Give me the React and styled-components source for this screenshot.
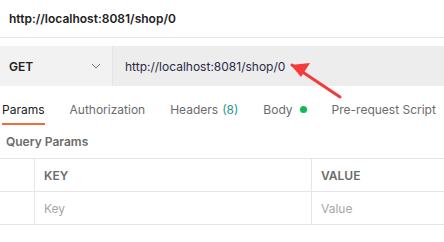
import React from "react";
import styled, { createGlobalStyle } from "styled-components";

const colors = {
  border: "#e6e6e6",
  text: "#212121",
  muted: "#6b6b6b",
  placeholder: "#a6a6a6",
  brand: "#f26b3a",
};

const GlobalStyle = createGlobalStyle`
  html, body {
    margin: 0;
    padding: 0;
    background: #ffffff;
    font-family: Inter, "Noto Sans", sans-serif;
  }
`;

const Page = styled.div`
  position: relative;
  width: 444px;
  height: 242px;
  overflow: hidden;
`;

const TitleBar = styled.div`
  display: flex;
  align-items: center;
  height: 37px;
  padding-left: 9px;
  border-bottom: 1px solid ${colors.border};
  font-size: 12px;
  font-weight: 600;
  color: ${colors.text};
`;

const RequestBar = styled.div`
  display: flex;
  height: 40px;
  margin-top: 8px;
`;

const MethodBox = styled.div`
  display: flex;
  align-items: center;
  justify-content: space-between;
  width: 113px;
  box-sizing: border-box;
  padding: 0 11px 0 9px;
  background: #f2f2f2;
  border-right: 1px solid #e4e4e4;
  font-size: 12px;
  font-weight: 600;
  color: ${colors.text};
`;

const UrlBox = styled.div`
  flex: 1;
  display: flex;
  align-items: center;
  padding-left: 12px;
  background: #ededed;
  font-size: 12px;
  color: #2b2b45;
`;

const Tabs = styled.div`
  display: flex;
  align-items: stretch;
  height: 30px;
  margin-top: 9px;
  padding-left: 2px;
  gap: 25px;
`;

const Tab = styled.div`
  display: flex;
  align-items: center;
  gap: 4px;
  font-size: 12px;
  white-space: nowrap;
  color: ${(p) => (p.active ? colors.text : colors.muted)};
  border-bottom: 2px solid ${(p) => (p.active ? colors.brand : "transparent")};
  box-sizing: border-box;
`;

const Count = styled.span`
  color: #1f9a8c;
`;

const Dot = styled.span`
  width: 7px;
  height: 7px;
  border-radius: 50%;
  background: #0cbb52;
  margin-left: 3px;
`;

const SectionTitle = styled.div`
  display: flex;
  align-items: center;
  height: 33px;
  padding-left: 6px;
  font-size: 12px;
  font-weight: 600;
  color: ${colors.muted};
`;

const Table = styled.div`
  display: grid;
  grid-template-columns: 34px 277px 1fr;
  border-top: 1px solid ${colors.border};
`;

const Cell = styled.div`
  display: flex;
  align-items: center;
  height: 32px;
  padding-left: ${(p) => (p.first ? 0 : 9)}px;
  border-bottom: 1px solid ${colors.border};
  border-left: ${(p) => (p.first ? "none" : `1px solid ${colors.border}`)};
  font-size: 12px;
  font-weight: ${(p) => (p.head ? 600 : 400)};
  color: ${(p) => (p.head ? colors.muted : colors.placeholder)};
`;

const Arrow = styled.svg`
  position: absolute;
  left: 280px;
  top: 55px;
`;

const Chevron = () => (
  <svg width="10" height="6" viewBox="0 0 10 6">
    <path d="M1 1l4 4 4-4" fill="none" stroke="#777" strokeWidth="1" />
  </svg>
);

const App = () => {
  return (
    <Page>
      <GlobalStyle />
      <TitleBar>http://localhost:8081/shop/0</TitleBar>
      <RequestBar>
        <MethodBox>
          <span>GET</span>
          <Chevron />
        </MethodBox>
        <UrlBox>http://localhost:8081/shop/0</UrlBox>
      </RequestBar>
      <Tabs>
        <Tab active>Params</Tab>
        <Tab>Authorization</Tab>
        <Tab>
          Headers <Count>(8)</Count>
        </Tab>
        <Tab>
          Body<Dot />
        </Tab>
        <Tab>Pre-request Script</Tab>
      </Tabs>
      <SectionTitle>Query Params</SectionTitle>
      <Table>
        <Cell first head />
        <Cell head>KEY</Cell>
        <Cell head>VALUE</Cell>
        <Cell first />
        <Cell>Key</Cell>
        <Cell>Value</Cell>
      </Table>
      <Arrow width="70" height="50" viewBox="0 0 70 50">
        <path
          d="M12 10 L60 42"
          stroke="#f53a3a"
          strokeWidth="3"
          strokeLinecap="round"
        />
        <path d="M11 10 L30 8 L21 22 Z" fill="#f53a3a" />
      </Arrow>
    </Page>
  );
};

export default App;
